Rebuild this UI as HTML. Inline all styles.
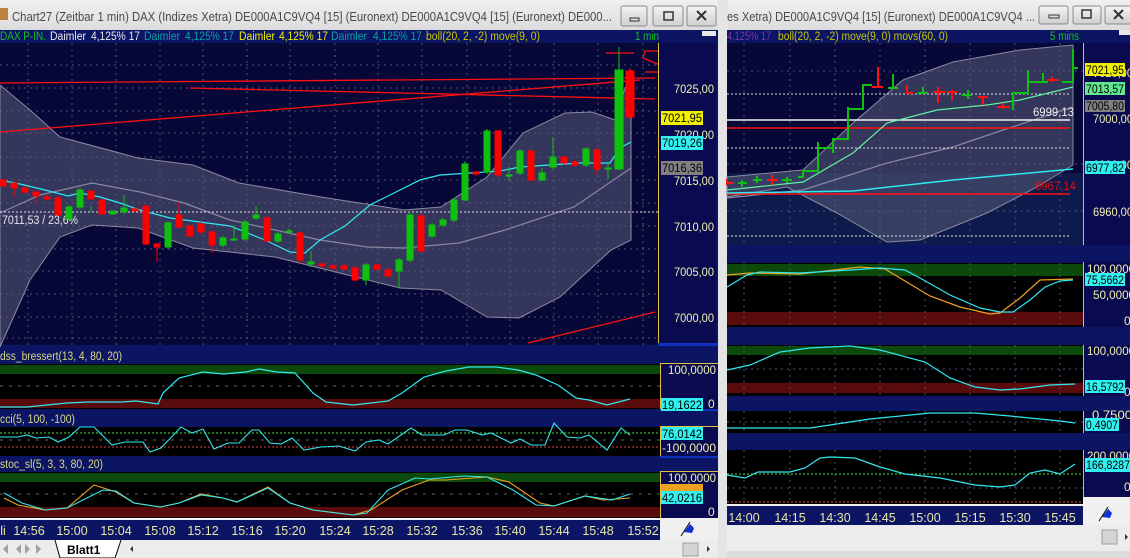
<!DOCTYPE html>
<html><head><meta charset="utf-8"><style>
html,body{margin:0;padding:0;background:#d8d8d8;width:1130px;height:558px;overflow:hidden}
svg{display:block;font-family:"Liberation Sans",sans-serif}
</style></head><body>
<svg width="1130" height="558" viewBox="0 0 1130 558" xmlns="http://www.w3.org/2000/svg">
<defs>
<linearGradient id="tb" x1="0" y1="0" x2="0" y2="1"><stop offset="0" stop-color="#f0f0f0"/><stop offset="1" stop-color="#dcdcdc"/></linearGradient>
<linearGradient id="btn" x1="0" y1="0" x2="0" y2="1"><stop offset="0" stop-color="#f4f4f4"/><stop offset="1" stop-color="#cfcfcf"/></linearGradient>
</defs>
<rect x="0" y="0" width="1130" height="558" fill="#d8d8d8"/>
<rect x="718" y="0" width="10" height="558" fill="#e4e4e4"/>
<!-- LEFT TITLE -->
<rect x="0" y="0" width="718" height="30" fill="url(#tb)"/>
<rect x="0" y="8" width="8" height="12" fill="#c08040"/>
<text x="12" y="21" font-size="12.5" fill="#4a4a4a" textLength="600" lengthAdjust="spacingAndGlyphs">Chart27 (Zeitbar 1 min)  DAX (Indizes Xetra) DE000A1C9VQ4 [15] (Euronext) DE000A1C9VQ4 [15] (Euronext) DE000...</text>
<g stroke="#8a8a8a" fill="url(#btn)"><rect x="621" y="6" width="26" height="20" rx="2"/><rect x="653" y="6" width="30" height="20" rx="2"/><rect x="687" y="6" width="29" height="20" rx="2"/></g>
<rect x="630" y="18" width="9" height="3" fill="none" stroke="#333"/>
<rect x="664" y="12" width="9" height="8" fill="none" stroke="#333" stroke-width="1.5"/>
<path d="M697 11 L706 20 M706 11 L697 20" stroke="#333" stroke-width="2"/>
<!-- RIGHT TITLE -->
<rect x="728" y="0" width="402" height="30" fill="url(#tb)"/>
<text x="727" y="21" font-size="12.5" fill="#4a4a4a" textLength="308" lengthAdjust="spacingAndGlyphs">es Xetra) DE000A1C9VQ4 [15] (Euronext) DE000A1C9VQ4 ...</text>
<g stroke="#8a8a8a" fill="url(#btn)"><rect x="1039" y="6" width="29" height="18" rx="2"/><rect x="1073" y="6" width="28" height="18" rx="2"/><rect x="1105" y="6" width="27" height="18" rx="2"/></g>
<rect x="1049" y="15" width="10" height="3" fill="none" stroke="#333"/>
<rect x="1082" y="10" width="9" height="8" fill="none" stroke="#333" stroke-width="1.5"/>
<path d="M1114 10 L1123 19 M1123 10 L1114 19" stroke="#333" stroke-width="2"/>

<!-- ================= LEFT CHART ================= -->
<rect x="0" y="30" width="718" height="490" fill="#0c1464"/>
<rect x="0" y="43" width="658" height="302" fill="#080838"/>
<g stroke="#50507a" stroke-dasharray="2,4" stroke-width="1">
<path d="M28 43V345M72 43V345M116 43V345M160 43V345M203 43V345M247 43V345M290 43V345M335 43V345M378 43V345M422 43V345M467 43V345M510 43V345M554 43V345M598 43V345M643 43V345"/>
<path d="M0 65H658M0 88H658M0 111H658M0 133H658M0 157H658M0 180H658M0 203H658M0 226H658M0 249H658M0 271H658M0 294H658M0 317H658M0 338H658"/>
</g>
<path d="M0 85 L30 110 L60 137 L138 158 L193 165 L239 183 L321 197 L404 210 L441 207 L487 177 L523 133 L565 113 L592 112 L615 120 L631 70 L631 240 L611 250 L560 297 L519 318 L487 317 L441 290 L400 288 L275 257 L193 248 L138 228 L92 225 L60 237 L30 280 L0 347 Z" fill="#5a5c78" fill-opacity="0.55" stroke="#8a8aa0" stroke-width="1"/>
<polyline points="0,213 40,195 92,183 140,192 184,203 230,220 275,230 320,240 367,247 404,248 459,243 505,230 574,207 631,168" fill="none" stroke="#8888a0" stroke-width="1.2"/>
<g stroke="#ff1010" stroke-width="1.3" fill="none">
<path d="M0 83 L655 78"/><path d="M190 88 L655 99"/><path d="M0 132 L640 80"/><path d="M528 343 L655 312"/>
<path d="M606 53 H634 M661 51 L645 51 L643 58 L660 65 L660 72 L645 72 M668 50 V72 H702"/>
</g>
<path d="M0 212H658" stroke="#e0e0e0" stroke-dasharray="2,2"/>
<text x="2" y="224" font-size="11.5" fill="#e8e8f0" textLength="76" lengthAdjust="spacingAndGlyphs">7011,53 / 23,6%</text>
<polyline points="0,180 20,184 45,190 68,196 80,193 100,197 120,203 140,210 170,218 200,222 230,226 265,240 290,252 305,253 320,240 345,226 370,205 400,190 420,180 440,175 470,173 500,171 520,167 580,163 610,163 620,148 631,142" fill="none" stroke="#30e8f0" stroke-width="1.2"/>
<g fill="#ff0000" stroke="#ff0000">
<rect x="0" y="180" width="6" height="6"/>
<path d="M14 183V197M25 186V194M36 190V203M47 195V200M58 196V216M102 199V215M135 207V212M146 205V245M157 243V262M179 202V228M190 225V237M201 222V233M212 230V253M267 216V242M300 232V264M322 263V268M333 264V269M344 264V270M355 266V281M377 264V271M388 268V277M421 214V252M476 171V176M498 130V177M531 150V181M564 156V165M575 160V167M597 148V175M630 68V118"/>
<rect x="11" y="183" width="6" height="5"/><rect x="22" y="188" width="6" height="4"/><rect x="33" y="192" width="6" height="4"/><rect x="44" y="197" width="6" height="2"/><rect x="55" y="198" width="6" height="17"/>
<rect x="88" y="191" width="6" height="8"/><rect x="99" y="200" width="6" height="14"/><rect x="132" y="209" width="6" height="2"/><rect x="143" y="206" width="6" height="38"/><rect x="154" y="244" width="6" height="3"/>
<rect x="176" y="215" width="6" height="12"/><rect x="187" y="226" width="6" height="10"/><rect x="198" y="224" width="6" height="8"/><rect x="209" y="232" width="6" height="13"/>
<rect x="264" y="218" width="6" height="23"/><rect x="297" y="233" width="6" height="27"/><rect x="319" y="264" width="6" height="2"/><rect x="330" y="266" width="6" height="2"/><rect x="341" y="266" width="6" height="3"/><rect x="352" y="268" width="6" height="12"/>
<rect x="374" y="265" width="6" height="4"/><rect x="385" y="270" width="6" height="6"/><rect x="418" y="216" width="6" height="35"/><rect x="473" y="172" width="6" height="2"/><rect x="495" y="131" width="6" height="44"/>
<rect x="528" y="151" width="6" height="29"/><rect x="561" y="157" width="6" height="6"/><rect x="572" y="162" width="6" height="3"/><rect x="594" y="150" width="6" height="19"/><rect x="626" y="71" width="8" height="46"/>
</g>
<g fill="#10c010" stroke="#10c010">
<path d="M69 205V221M80 188V209M91 206V212M124 195V214M168 221V249M223 236V247M234 225V241M245 220V241M256 206V220M278 232V243M289 229V234M311 251V267M366 263V285M399 258V288M410 213V262M432 223V238M443 218V227M454 198V222M465 161V201M487 129V174M509 167V181M520 149V175M542 168V181M553 137V169M586 147V167M608 163V179M619 47V170"/>
<rect x="66" y="207" width="6" height="12"/><rect x="77" y="190" width="6" height="17"/><rect x="110" y="211" width="6" height="3"/><rect x="121" y="208" width="6" height="4"/>
<rect x="165" y="223" width="6" height="24"/><rect x="220" y="238" width="6" height="7"/><rect x="231" y="239" width="6" height="1"/><rect x="242" y="222" width="6" height="17"/><rect x="253" y="215" width="6" height="3"/>
<rect x="275" y="234" width="6" height="7"/><rect x="286" y="231" width="6" height="1"/><rect x="308" y="262" width="6" height="2"/><rect x="363" y="265" width="6" height="15"/><rect x="396" y="260" width="6" height="11"/>
<rect x="407" y="215" width="6" height="45"/><rect x="429" y="225" width="6" height="11"/><rect x="440" y="220" width="6" height="5"/><rect x="451" y="200" width="6" height="20"/><rect x="462" y="164" width="6" height="36"/>
<rect x="484" y="131" width="6" height="41"/><rect x="506" y="175" width="6" height="1"/><rect x="517" y="151" width="6" height="22"/><rect x="539" y="173" width="6" height="7"/><rect x="550" y="157" width="6" height="10"/>
<rect x="583" y="149" width="6" height="16"/><rect x="605" y="168" width="6" height="1"/><rect x="615" y="70" width="8" height="99"/>
</g>
<!-- header -->
<g font-size="11.5" lengthAdjust="spacingAndGlyphs">
<text x="0" y="40" fill="#10c020" textLength="46" lengthAdjust="spacingAndGlyphs">DAX P-IN.</text>
<text x="50" y="40" fill="#e8e8e8" textLength="36" lengthAdjust="spacingAndGlyphs">Daimler</text><text x="91" y="40" fill="#e8e8e8" textLength="49" lengthAdjust="spacingAndGlyphs">4,125% 17</text>
<text x="144" y="40" fill="#10a0a0" textLength="36" lengthAdjust="spacingAndGlyphs">Daimler</text><text x="185" y="40" fill="#10a0a0" textLength="49" lengthAdjust="spacingAndGlyphs">4,125% 17</text>
<text x="239" y="40" fill="#f0f000" textLength="36" lengthAdjust="spacingAndGlyphs">Daimler</text><text x="279" y="40" fill="#f0f000" textLength="49" lengthAdjust="spacingAndGlyphs">4,125% 17</text>
<text x="331" y="40" fill="#10a0a0" textLength="36" lengthAdjust="spacingAndGlyphs">Daimler</text><text x="373" y="40" fill="#10a0a0" textLength="49" lengthAdjust="spacingAndGlyphs">4,125% 17</text>
<text x="426" y="40" fill="#c8c800" textLength="114" lengthAdjust="spacingAndGlyphs">boll(20, 2, -2) move(9, 0)</text>
<text x="635" y="40" fill="#10c020" textLength="24" lengthAdjust="spacingAndGlyphs">1 min</text>
</g>
<rect x="702" y="31" width="14" height="5" fill="#e8e8e8"/>
<rect x="658" y="43" width="58" height="302" fill="#0a0a50"/>
<path d="M658.5 43V345" stroke="#e0c040"/>
<rect x="658" y="343" width="60" height="3" fill="#1030c0"/>
<g font-size="12" fill="#f0f0b0">
<text x="674" y="93" textLength="40" lengthAdjust="spacingAndGlyphs">7025,00</text><text x="674" y="139" textLength="40" lengthAdjust="spacingAndGlyphs">7020,00</text><text x="674" y="185" textLength="40" lengthAdjust="spacingAndGlyphs">7015,00</text><text x="674" y="231" textLength="40" lengthAdjust="spacingAndGlyphs">7010,00</text><text x="674" y="276" textLength="40" lengthAdjust="spacingAndGlyphs">7005,00</text><text x="674" y="322" textLength="40" lengthAdjust="spacingAndGlyphs">7000,00</text>
</g>
<g font-size="12" fill="#000">
<rect x="661" y="111" width="42" height="14" fill="#f0f000"/><text x="662" y="122" textLength="40" lengthAdjust="spacingAndGlyphs">7021,95</text>
<rect x="661" y="136" width="42" height="14" fill="#30f0f0"/><text x="662" y="147" textLength="40" lengthAdjust="spacingAndGlyphs">7019,26</text>
<rect x="661" y="161" width="42" height="14" fill="#808080"/><text x="662" y="172" textLength="40" lengthAdjust="spacingAndGlyphs">7016,36</text>
</g>

<!-- dss panel -->
<text x="0" y="360" font-size="11.5" fill="#d8d880" textLength="122" lengthAdjust="spacingAndGlyphs">dss_bressert(13, 4, 80, 20)</text>
<rect x="0" y="364" width="660" height="45" fill="#000"/>
<rect x="0" y="365" width="660" height="9" fill="#0c4a0c"/>
<rect x="0" y="399" width="660" height="9" fill="#5a0c0c"/>
<path d="M0 386H660" stroke="#606060" stroke-dasharray="3,6"/>
<polyline points="0,407 27,407 67,403 89,402 121,402 136,401 158,404 163,393 179,378 203,372 223,374 246,372 259,369 277,372 295,373 313,393 326,402 353,405 371,403 388,401 402,393 424,377 446,371 469,367 496,367 518,370 536,375 558,385 576,398 589,400 607,405 630,399" fill="none" stroke="#30e8f0" stroke-width="1.2"/>
<text x="0" y="423" font-size="11.5" fill="#d8d880" textLength="75" lengthAdjust="spacingAndGlyphs">cci(5, 100, -100)</text>
<rect x="0" y="427" width="660" height="29" fill="#000"/>
<path d="M0 433H660" stroke="#40e040" stroke-dasharray="2,2"/>
<path d="M0 447H660" stroke="#e04040" stroke-dasharray="2,2"/>
<path d="M0 440H660" stroke="#606060" stroke-dasharray="3,6"/>
<polyline points="0,437 18,437 27,435 36,438 49,437 58,442 69,437 80,427 94,427 112,445 125,442 143,442 150,452 161,448 181,427 192,433 203,429 214,449 228,443 239,443 252,430 259,430 270,443 281,444 292,438 304,450 321,447 339,446 355,451 366,442 379,440 388,444 411,428 422,435 444,435 455,430 467,430 482,435 491,433 511,443 520,439 531,445 545,445 554,423 567,437 580,438 589,435 607,450 621,428 630,435" fill="none" stroke="#30e8f0" stroke-width="1.1"/>
<text x="0" y="468" font-size="11.5" fill="#d8d880" textLength="103" lengthAdjust="spacingAndGlyphs">stoc_sl(5, 3, 3, 80, 20)</text>
<rect x="0" y="472" width="660" height="46" fill="#000"/>
<rect x="0" y="473" width="660" height="9" fill="#0c4a0c"/>
<rect x="0" y="507" width="660" height="10" fill="#5a0c0c"/>
<path d="M0 494H660" stroke="#606060" stroke-dasharray="3,6"/>
<polyline points="4,498 18,505 45,510 67,508 94,485 116,492 134,503 161,507 179,503 201,494 223,498 237,502 268,487 290,503 313,510 353,515 371,510 402,490 429,480 446,480 487,477 509,482 540,503 554,506 585,496 603,500 630,498" fill="none" stroke="#f0a020" stroke-width="1.1"/>
<polyline points="4,493 22,503 45,510 67,508 103,490 116,491 134,503 160,507 179,503 201,495 223,498 237,502 268,488 290,503 313,510 353,515 367,513 388,490 415,478 429,479 464,476 487,477 513,490 536,505 554,506 585,496 612,500 630,494" fill="none" stroke="#30e8f0" stroke-width="1.1"/>
<g fill="#0a0a50"><rect x="660" y="363" width="58" height="47"/><rect x="660" y="426" width="58" height="31"/><rect x="660" y="471" width="58" height="47"/></g>
<g stroke="#e0c040"><path d="M660.5 363V410M660.5 426V457M660.5 471V518M660 363.5H718M660 426.5H718M660 471.5H718"/></g>
<g stroke="#1030c0" stroke-width="2"><path d="M660 410H718M660 457H718"/></g>
<g font-size="12" fill="#f0f0b0">
<text x="668" y="374" textLength="48" lengthAdjust="spacingAndGlyphs">100,0000</text><text x="708" y="408">0</text>
<text x="662" y="452" textLength="54" lengthAdjust="spacingAndGlyphs">-100,0000</text>
<text x="668" y="482" textLength="48" lengthAdjust="spacingAndGlyphs">100,0000</text><text x="708" y="516">0</text>
</g>
<g font-size="12" fill="#000">
<rect x="661" y="398" width="42" height="13" fill="#30f0f0"/><text x="662" y="409" textLength="40" lengthAdjust="spacingAndGlyphs">19,1622</text>
<rect x="661" y="427" width="42" height="13" fill="#30f0f0"/><text x="662" y="438" textLength="40" lengthAdjust="spacingAndGlyphs">76,0142</text>
<rect x="661" y="484" width="42" height="7" fill="#f0a020"/>
<rect x="661" y="491" width="42" height="13" fill="#30f0f0"/><text x="662" y="502" textLength="40" lengthAdjust="spacingAndGlyphs">42,0216</text>
</g>
<path d="M0 519H660" stroke="#f0f0f0" stroke-width="2"/>
<rect x="0" y="520" width="660" height="20" fill="#0c1464"/>
<rect x="660" y="518" width="58" height="22" fill="#f0f0f0"/>
<path d="M684 532 L690 524 L694 528 L692 533 Z" fill="#1030d0"/><path d="M681 536 L690 522" stroke="#000"/>
<g font-size="12.5" fill="#e8e8a8" text-anchor="middle">
<text x="3" y="535">li</text><text x="29" y="535">14:56</text><text x="72" y="535">15:00</text><text x="116" y="535">15:04</text><text x="160" y="535">15:08</text><text x="203" y="535">15:12</text><text x="247" y="535">15:16</text><text x="290" y="535">15:20</text><text x="335" y="535">15:24</text><text x="378" y="535">15:28</text><text x="422" y="535">15:32</text><text x="467" y="535">15:36</text><text x="510" y="535">15:40</text><text x="554" y="535">15:44</text><text x="598" y="535">15:48</text><text x="643" y="535">15:52</text>
</g>
<rect x="0" y="540" width="718" height="18" fill="#ececec"/>
<g fill="#a0a0a0"><path d="M3 549 L8 544 V554Z M16 549 L21 544 V554Z M25 544 L30 549 L25 554Z M36 544 L41 549 L36 554Z"/></g>
<path d="M55 540 L60 558 H115 L121 540" fill="#fff" stroke="#000"/>
<text x="67" y="554" font-size="12" font-weight="bold" fill="#000">Blatt1</text>
<path d="M130 549 L133 546 V552Z" fill="#333"/>
<rect x="683" y="543" width="15" height="13" fill="#d4d4d4" stroke="#a0a0a0"/>
<path d="M707 546 L710 549 L707 552Z" fill="#333"/>

<!-- ================= RIGHT CHART ================= -->
<rect x="727" y="30" width="403" height="495" fill="#0c1464"/>
<rect x="727" y="43" width="356" height="202" fill="#0c1a4c"/>
<rect x="727" y="43" width="356" height="130" fill="#080838"/>
<g stroke="#50507a" stroke-dasharray="2,4">
<path d="M744 43V245M790 43V245M835 43V245M880 43V245M925 43V245M970 43V245M1015 43V245M1060 43V245"/>
<path d="M727 71H1083M727 164H1083M727 211H1083"/>
</g>
<path d="M727 177 L803 170 L853 123 L903 80 L953 62 L1020 50 L1073 45 L1073 165 L1037 187 L987 213 L920 240 L887 242 L837 213 L787 187 L727 197 Z" fill="#5a5c78" fill-opacity="0.55" stroke="#8a8aa0"/>
<polyline points="727,198 803,190 887,163 953,147 1003,130 1073,107" fill="none" stroke="#8888a0" stroke-width="1.2"/>
<g stroke-dasharray="2,2" stroke="#e0e0e0"><path d="M727 94H1070M727 148H1070M727 236H1070"/></g>
<path d="M727 120H1070" stroke="#f0f0f0" stroke-width="1.5"/>
<path d="M727 128H1070" stroke="#ff1010" stroke-width="1.5"/>
<path d="M727 194H1070" stroke="#ff1010" stroke-width="1.5"/>
<text x="1033" y="116" font-size="12" fill="#f0f0f0" textLength="41" lengthAdjust="spacingAndGlyphs">6999,13</text>
<text x="1035" y="190" font-size="12" fill="#e01010" textLength="41" lengthAdjust="spacingAndGlyphs">6967,14</text>
<polyline points="727,190 803,182 853,153 887,123 937,110 987,105 1020,100 1073,87" fill="none" stroke="#60f0a0" stroke-width="1.2"/>
<polyline points="727,193 853,191 953,180 1073,169" fill="none" stroke="#30e8f0" stroke-width="1.5"/>
<g stroke="#ff1010" stroke-width="2" fill="none">
<path d="M727 183H734M727 179V186M767 180H778M772 175V185M872 87H883M878 67V87M907 85V93H913M933 92H945M938 87V103M947 92H957M952 90V100M978 97H988M983 97V105M997 107H1010M1003 103V109M1047 80H1058M1052 77V82"/>
</g>
<g stroke="#10c010" stroke-width="2" fill="none">
<path d="M738 183H747M742 180V187M753 180H762M757 176V183M782 180H792M787 177V183M798 177H803V171H818V142M818 148H833M833 153V139H848V107M848 109H863V85H872M888 88H898M893 74V88M918 93H928M923 87V93M962 95H972M968 90V99M1013 110V93H1028V70M1028 82H1038M1038 82H1048M1043 73V82M1062 82H1073V49M1073 68H1078"/>
</g>
<g font-size="11.5">
<text x="727" y="40" fill="#7a3aa8" textLength="44" lengthAdjust="spacingAndGlyphs">4,125% 17</text>
<text x="778" y="40" fill="#c8c800" textLength="170" lengthAdjust="spacingAndGlyphs">boll(20, 2, -2) move(9, 0) movs(60, 0)</text>
<text x="1050" y="40" fill="#10c020" textLength="29" lengthAdjust="spacingAndGlyphs">5 mins</text>
</g>
<rect x="1119" y="30" width="11" height="5" fill="#e8e8e8"/>
<rect x="1083" y="43" width="47" height="202" fill="#0a0a50"/>
<path d="M1083.5 43V245" stroke="#e0c040"/>
<g font-size="12" fill="#f0f0b0"><text x="1093" y="123" textLength="40" lengthAdjust="spacingAndGlyphs">7000,00</text><text x="1093" y="169" textLength="40" lengthAdjust="spacingAndGlyphs">6980,00</text><text x="1093" y="216" textLength="40" lengthAdjust="spacingAndGlyphs">6960,00</text><text x="1093" y="77" textLength="40" lengthAdjust="spacingAndGlyphs">7020,00</text></g>
<g font-size="12" fill="#000">
<rect x="1085" y="63" width="40" height="13" fill="#f0f000"/><text x="1086" y="74" textLength="38" lengthAdjust="spacingAndGlyphs">7021,95</text>
<rect x="1085" y="82" width="40" height="13" fill="#60e890"/><text x="1086" y="93" textLength="38" lengthAdjust="spacingAndGlyphs">7013,57</text>
<rect x="1085" y="100" width="40" height="12" fill="#808080"/><text x="1086" y="110" textLength="38" lengthAdjust="spacingAndGlyphs">7005,80</text>
<rect x="1085" y="161" width="40" height="13" fill="#30f0f0"/><text x="1086" y="172" textLength="38" lengthAdjust="spacingAndGlyphs">6977,82</text>
</g>

<!-- panel A -->
<rect x="727" y="263" width="356" height="64" fill="#000"/>
<rect x="727" y="264" width="356" height="12" fill="#0c4a0c"/>
<rect x="727" y="312" width="356" height="13" fill="#5a0c0c"/>
<g stroke="#50507a" stroke-dasharray="2,4"><path d="M744 263V327M790 263V327M835 263V327M880 263V327M925 263V327M970 263V327M1015 263V327M1060 263V327"/></g>
<polyline points="727,275 750,273 800,274 860,267 885,269 900,278 930,296 960,307 990,314 1000,313 1020,298 1040,280 1073,279" fill="none" stroke="#f0a020" stroke-width="1.2"/>
<polyline points="727,287 747,275 760,272 800,273 850,270 880,268 905,270 920,278 950,295 980,308 1000,312 1013,312 1030,300 1045,287 1060,281 1073,280" fill="none" stroke="#30e8f0" stroke-width="1.2"/>
<rect x="727" y="345" width="356" height="51" fill="#000"/>
<rect x="727" y="346" width="356" height="9" fill="#0c4a0c"/>
<rect x="727" y="383" width="356" height="10" fill="#5a0c0c"/>
<g stroke="#50507a" stroke-dasharray="2,4"><path d="M744 345V396M790 345V396M835 345V396M880 345V396M925 345V396M970 345V396M1015 345V396M1060 345V396M727 369H1083"/></g>
<polyline points="727,370 750,365 780,352 810,348 850,346 880,350 925,362 950,378 975,387 1000,390 1020,389 1050,385 1075,384" fill="none" stroke="#30e8f0" stroke-width="1.2"/>
<rect x="727" y="411" width="356" height="22" fill="#000"/>
<g stroke="#50507a" stroke-dasharray="2,4"><path d="M744 411V433M790 411V433M835 411V433M880 411V433M925 411V433M970 411V433M1015 411V433M1060 411V433M727 422H1083"/></g>
<polyline points="727,428 810,428 870,419 930,413 975,413 1010,416 1060,421 1075,423" fill="none" stroke="#30e8f0" stroke-width="1.2"/>
<rect x="727" y="450" width="356" height="55" fill="#000"/>
<g stroke="#50507a" stroke-dasharray="2,4"><path d="M744 450V505M790 450V505M835 450V505M880 450V505M925 450V505M970 450V505M1015 450V505M1060 450V505M727 488H1083"/></g>
<path d="M727 474H1083" stroke="#40e040" stroke-dasharray="2,2"/>
<path d="M727 502H1083" stroke="#e04040" stroke-dasharray="2,2"/>
<polyline points="727,475 745,478 758,472 790,472 805,468 820,458 830,457 855,458 880,467 905,474 940,478 975,485 1000,487 1015,485 1030,473 1045,470 1060,474 1075,464" fill="none" stroke="#30e8f0" stroke-width="1.2"/>
<g fill="#0a0a50"><rect x="1083" y="262" width="47" height="65"/><rect x="1083" y="345" width="47" height="51"/><rect x="1083" y="411" width="47" height="22"/><rect x="1083" y="450" width="47" height="47"/></g>
<g stroke="#e0c040"><path d="M1083.5 262V327M1083.5 345V396M1083.5 411V433M1083.5 450V497"/></g>
<g font-size="12" fill="#f0f0b0">
<text x="1087" y="273" textLength="48" lengthAdjust="spacingAndGlyphs">100,0000</text><text x="1093" y="299" textLength="42" lengthAdjust="spacingAndGlyphs">50,0000</text><text x="1124" y="325">0</text>
<text x="1087" y="355" textLength="48" lengthAdjust="spacingAndGlyphs">100,0000</text><text x="1124" y="396">0</text>
<text x="1092" y="419" textLength="40" lengthAdjust="spacingAndGlyphs">0,7500</text><text x="1087" y="460" textLength="48" lengthAdjust="spacingAndGlyphs">200,0000</text><text x="1124" y="491">0</text>
</g>
<g font-size="12" fill="#000">
<rect x="1085" y="273" width="40" height="13" fill="#30f0f0"/><text x="1086" y="284" textLength="38" lengthAdjust="spacingAndGlyphs">75,5662</text>
<rect x="1085" y="380" width="40" height="13" fill="#30f0f0"/><text x="1086" y="391" textLength="38" lengthAdjust="spacingAndGlyphs">16,5792</text>
<rect x="1085" y="418" width="34" height="13" fill="#30f0f0"/><text x="1086" y="429" textLength="32" lengthAdjust="spacingAndGlyphs">0,4907</text>
<rect x="1085" y="458" width="45" height="14" fill="#30f0f0"/><text x="1086" y="469" textLength="44" lengthAdjust="spacingAndGlyphs">166,8287</text>
</g>
<path d="M727 505H1083" stroke="#f0f0f0" stroke-width="2"/>
<rect x="727" y="506" width="356" height="20" fill="#0c1464"/>
<rect x="1083" y="497" width="47" height="28" fill="#f0f0f0"/>
<path d="M1102 517 L1108 509 L1112 513 L1110 518 Z" fill="#1030d0"/><path d="M1099 521 L1108 507" stroke="#000"/>
<g font-size="12.5" fill="#e8e8a8" text-anchor="middle">
<text x="744" y="522">14:00</text><text x="790" y="522">14:15</text><text x="835" y="522">14:30</text><text x="880" y="522">14:45</text><text x="925" y="522">15:00</text><text x="970" y="522">15:15</text><text x="1015" y="522">15:30</text><text x="1060" y="522">15:45</text>
</g>
<rect x="727" y="525" width="403" height="33" fill="#ececec"/>
<rect x="727" y="551" width="403" height="7" fill="#dcdcdc"/>
<rect x="1102" y="530" width="15" height="14" fill="#d4d4d4" stroke="#a0a0a0"/>
<path d="M1125 534 L1128 537 L1125 540Z" fill="#333"/>
</svg>
</body></html>
